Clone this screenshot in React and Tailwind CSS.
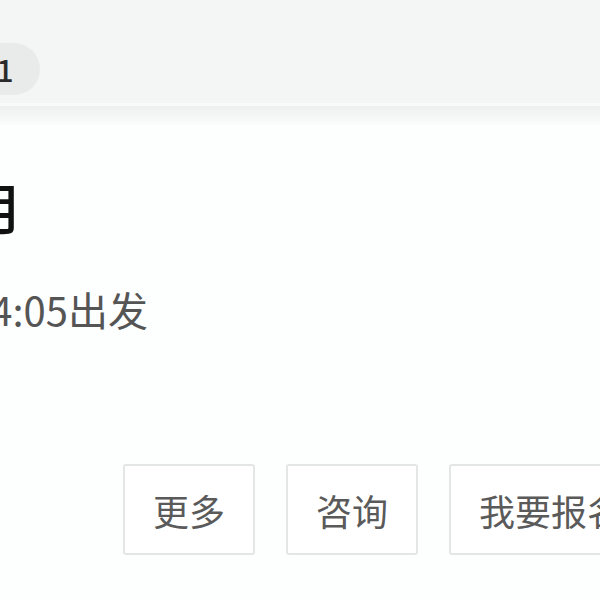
export default function App() {
  const actions = ['更多', '咨询', '我要报名']

  return (
    <div className="w-[600px] h-[600px] overflow-hidden bg-[#fdfefe] font-['Noto_Sans_CJK_SC',sans-serif]">
      {/* top bar */}
      <div className="h-[103px] bg-[#f4f5f5] flex items-start pt-[43px]">
        <div className="-ml-[30px] w-[70px] h-[52px] rounded-full bg-[#e9eaea] flex items-center justify-center text-[30px] leading-none font-medium text-[#2a2a2a]">
          1
        </div>
      </div>
      <div className="h-[22px] border-t-[3px] border-[#f9fafa] bg-gradient-to-b from-[#eef0f0] to-[#fbfcfc]" />

      {/* info */}
      <div className="pt-[55px]">
        <div className="-ml-[31px] text-[54px] leading-none font-medium text-[#111]">月</div>
        <div className="mt-[55px] -ml-[32px] text-[40px] leading-none text-[#555]">14:05出发</div>
      </div>

      {/* actions */}
      <div className="mt-[135px] ml-[123px] flex gap-[31px] whitespace-nowrap">
        {actions.map((a) => (
          <button
            key={a}
            className="h-[91px] px-[28px] border-2 border-[#e4e6e6] rounded-[3px] bg-white text-[36px] leading-none text-[#5a5a5a] shrink-0"
          >
            {a}
          </button>
        ))}
      </div>
    </div>
  )
}
